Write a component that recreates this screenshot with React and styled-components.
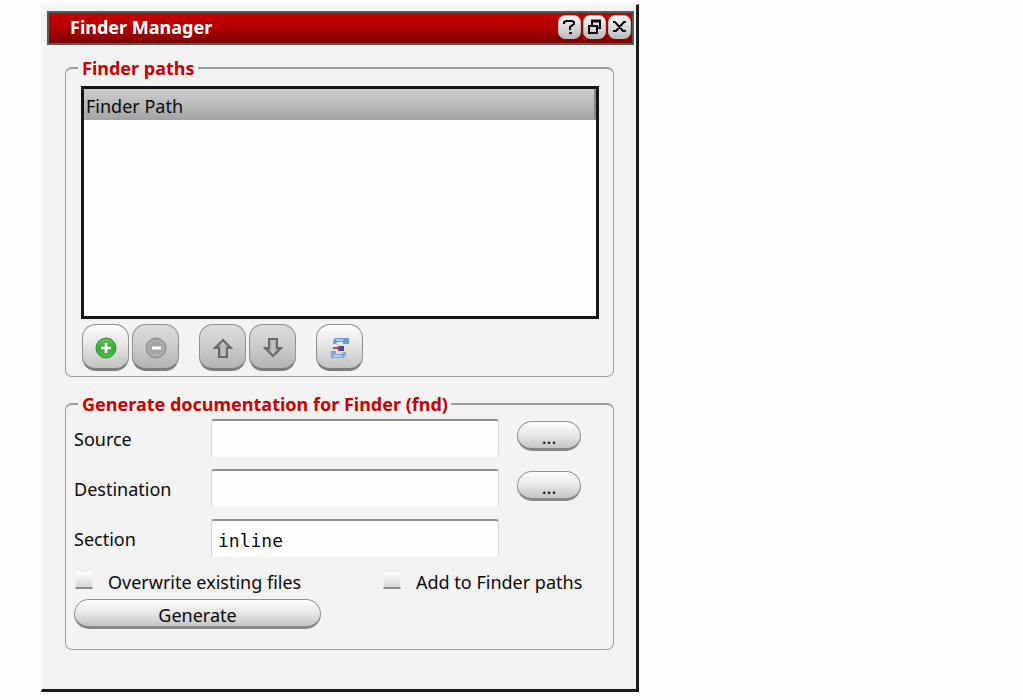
import React, { useState } from "react";
import styled, { createGlobalStyle } from "styled-components";

const GlobalStyle = createGlobalStyle`
  *, *::before, *::after { box-sizing: border-box; }
  body {
    margin: 0;
    background: #fdfdfd;
    color: #0a0a0a;
    font-family: "Noto Sans", "Open Sans", sans-serif;
    font-size: 18px;
    line-height: 24px;
  }
  button, input { font: inherit; color: inherit; margin: 0; }
  svg { display: block; }
`;

const Desktop = styled.main`
  padding: 4px 0 8px 41px;
`;

const Dialog = styled.section`
  width: 100%;
  max-width: 598px;
  background: #f2f2f2;
  border: 1px solid #f4f4f4;
  border-width: 1px 3px 3px 1px;
  border-right-color: #1c1e1d;
  border-bottom-color: #1c1e1d;
  box-shadow: inset 1px 1px 0 #fdfdfd;
  padding: 6px 2px 39px 5px;
`;

const TitleBar = styled.header`
  display: flex;
  align-items: center;
  gap: 2px;
  height: 34px;
  padding: 0 1px 2px 21px;
  border: 2px solid #565c59;
  background: linear-gradient(#c40000, #b40000 45%, #7c0000);
`;

const Title = styled.h1`
  flex: 1;
  margin: 0;
  font-size: 18px;
  line-height: 24px;
  font-weight: 700;
  color: #fff;
`;

const TitleButton = styled.button`
  display: grid;
  place-items: center;
  width: 23px;
  height: 24px;
  padding: 0;
  border: 1px solid #b9bbba;
  border-radius: 7px;
  background: linear-gradient(#f8f8f8, #bcbcbc);
`;

const Body = styled.div`
  display: flex;
  flex-direction: column;
  gap: 15px;
  padding: 11px 20px 0 18px;
`;

const Group = styled.fieldset`
  min-width: 0;
  margin: 0;
  border: 1px solid #9a9e9c;
  border-top-width: 2px;
  border-radius: 7px;
  padding: ${(p) => p.$padding};
`;

const Legend = styled.legend`
  margin-left: ${(p) => p.$indent}px;
  padding: 0 3px 0 4px;
  font-weight: 700;
  color: #c80000;
`;

const ListFrame = styled.div`
  min-height: 233px;
  border: 3px solid #151716;
  background: #fdfdfd;
`;

const PathTable = styled.table`
  width: 100%;
  border-collapse: collapse;
`;

const HeadCell = styled.th`
  height: 31px;
  padding: 5px 2px 2px;
  text-align: left;
  font-weight: 400;
  line-height: 24px;
  background: linear-gradient(#cdcdcd, #bcbebd 40%, #a3a3a5);
  border-right: 2px solid #8b8d8c;
`;

const ToolBar = styled.div`
  display: flex;
  gap: 20px;
  padding: 5px 1px 0;
`;

const ToolPair = styled.div`
  display: flex;
  gap: 3px;
`;

const ToolButton = styled.button`
  display: grid;
  place-items: center;
  width: 47px;
  height: 47px;
  padding: 2px 0 0;
  border: 1px solid #8f9190;
  border-bottom: 3px solid #7b7d7c;
  border-radius: 14px;
  background: ${(p) =>
    p.disabled
      ? "linear-gradient(#dcdcdc, #cbcbcb 50%, #b3b3b3)"
      : "linear-gradient(#fdfdfd, #e2e2e2 50%, #c2c2c2)"};
`;

const Form = styled.div`
  display: grid;
  grid-template-columns: 137px minmax(0, 1fr) 82px;
  row-gap: 12px;
  padding-right: 12px;
`;

const Label = styled.label`
  line-height: 40px;
  height: 38px;
`;

const Field = styled.input`
  width: 100%;
  height: 38px;
  padding: 4px 6px 0;
  border: 1px solid #d6d6d6;
  border-top: 2px solid #8f9190;
  border-bottom-color: #fafafa;
  border-radius: 3px;
  background: #fdfdfd;
  font-family: "DejaVu Sans Mono", monospace;
  outline: none;
`;

const PillButton = styled.button`
  width: 247px;
  max-width: 100%;
  height: 30px;
  padding: 3px 0 0;
  border: 1px solid #8f9190;
  border-bottom: 3px solid #858786;
  border-radius: 15px;
  background: linear-gradient(#fefefe, #e6e6e6 50%, #c4c4c4);
  line-height: 22px;
`;

const BrowseButton = styled(PillButton)`
  width: 64px;
  margin-top: 2px;
  justify-self: end;
`;

const Options = styled.div`
  display: grid;
  grid-template-columns: 308px 1fr;
  margin: 13px 0 5px;
`;

const Option = styled.label`
  display: flex;
  align-items: center;
  gap: 15px;
`;

const CheckBox = styled.input`
  appearance: none;
  width: 18px;
  height: 18px;
  margin: 0 0 5px 1px;
  border: 1px solid #f0f0f0;
  border-bottom: 2px solid #8b8d8c;
  background: linear-gradient(#fff, #d6d6d6);
  &:checked { background: #8b8d8c; }
`;

const HelpIcon = () => (
  <svg width="15" height="16" viewBox="0 0 15 16" fill="none" stroke="#0a0a0a" strokeWidth="2">
    <path d="M2 5V3l2-1h6l2 1v2L8 8v3M7 14h3" />
  </svg>
);

const RestoreIcon = () => (
  <svg width="15" height="16" viewBox="0 0 15 16" fill="none" stroke="#0a0a0a" strokeWidth="2">
    <path d="M5 6V2h8v7h-3" />
    <path d="M4 2h10" strokeWidth="3" />
    <path d="M2 7h8v7H2z" />
    <path d="M5 5v2" />
  </svg>
);

const CloseIcon = () => (
  <svg width="15" height="16" viewBox="0 0 15 16" fill="none" stroke="#0a0a0a" strokeWidth="2">
    <path d="M1 3h2l8 9h3M14 3h-2l-8 9H1" />
  </svg>
);

const AddIcon = () => (
  <svg width="22" height="22" viewBox="0 0 22 22">
    <defs>
      <linearGradient id="add" x1="0" y1="0" x2="0" y2="1">
        <stop offset="0" stopColor="#6cc162" />
        <stop offset="0.5" stopColor="#35ac30" />
        <stop offset="1" stopColor="#4cc444" />
      </linearGradient>
    </defs>
    <circle cx="11" cy="11" r="10" fill="url(#add)" stroke="#2f8f2f" />
    <path d="M6 11h10M11 6v10" stroke="#fff" strokeWidth="2.600" />
  </svg>
);

const RemoveIcon = () => (
  <svg width="22" height="22" viewBox="0 0 22 22">
    <circle cx="11" cy="11" r="10" fill="#a4a4a4" stroke="#8c8c8c" />
    <circle cx="11" cy="11" r="7.500" fill="none" stroke="#b9b9b9" />
    <path d="M7 11h9" stroke="#fff" strokeWidth="3" />
  </svg>
);

const ArrowIcon = ({ down }) => (
  <svg width="20" height="20" viewBox="0 0 20 20">
    <defs>
      <linearGradient id={down ? "arrowDown" : "arrowUp"}>
        <stop offset="0" stopColor="#787878" />
        <stop offset="0.5" stopColor="#c4c4c4" />
        <stop offset="1" stopColor="#858585" />
      </linearGradient>
    </defs>
    <path
      d={down ? "M6 1h8v9h4l-8 8-8-8h4z" : "M6 19h8v-9h4L10 2l-8 8h4z"}
      fill={down ? "url(#arrowDown)" : "url(#arrowUp)"}
      stroke="#686868"
      strokeWidth="2"
    />
  </svg>
);

const RefreshIcon = () => (
  <svg width="20" height="22" viewBox="0 0 20 22">
    <path d="M5 1h14v6h-6V5H8L5 7H3V4z" fill="#6f9bd0" />
    <path d="M6 2h7v2H6z" fill="#a9c8ea" />
    <path d="M1 14h5v3h5l3-2h2v3l-3 3H1z" fill="#7ea8da" />
    <path d="M4 18h8v2H4z" fill="#b5d0ee" />
    <path d="M3 11h6" stroke="#d64545" strokeWidth="2" />
    <path d="M8 9h6v5H8z" fill="#3c4f93" />
    <path d="M8 9h2v5H8z" fill="#8a3f6c" />
  </svg>
);

export default function App() {
  const [section, setSection] = useState("inline");
  return (
    <>
      <GlobalStyle />
      <Desktop>
        <Dialog aria-label="Finder Manager">
          <TitleBar>
            <Title>Finder Manager</Title>
            <TitleButton aria-label="Help"><HelpIcon /></TitleButton>
            <TitleButton aria-label="Restore"><RestoreIcon /></TitleButton>
            <TitleButton aria-label="Close"><CloseIcon /></TitleButton>
          </TitleBar>
          <Body>
            <Group $padding="6px 14px 5px 15px">
              <Legend $indent={-3}>Finder paths</Legend>
              <ListFrame>
                <PathTable>
                  <thead>
                    <tr><HeadCell scope="col">Finder Path</HeadCell></tr>
                  </thead>
                </PathTable>
              </ListFrame>
              <ToolBar>
                <ToolPair>
                  <ToolButton aria-label="Add"><AddIcon /></ToolButton>
                  <ToolButton aria-label="Remove" disabled><RemoveIcon /></ToolButton>
                </ToolPair>
                <ToolPair>
                  <ToolButton aria-label="Move up" disabled><ArrowIcon /></ToolButton>
                  <ToolButton aria-label="Move down" disabled><ArrowIcon down /></ToolButton>
                </ToolPair>
                <ToolButton aria-label="Refresh"><RefreshIcon /></ToolButton>
              </ToolBar>
            </Group>
            <Group $padding="3px 20px 20px 8px">
              <Legend $indent={4}>Generate documentation for Finder (fnd)</Legend>
              <Form>
                <Label htmlFor="source">Source</Label>
                <Field id="source" />
                <BrowseButton>...</BrowseButton>
                <Label htmlFor="destination">Destination</Label>
                <Field id="destination" />
                <BrowseButton>...</BrowseButton>
                <Label htmlFor="section">Section</Label>
                <Field id="section" value={section} onChange={(e) => setSection(e.target.value)} />
              </Form>
              <Options>
                <Option><CheckBox type="checkbox" />Overwrite existing files</Option>
                <Option><CheckBox type="checkbox" />Add to Finder paths</Option>
              </Options>
              <PillButton>Generate</PillButton>
            </Group>
          </Body>
        </Dialog>
      </Desktop>
    </>
  );
}
